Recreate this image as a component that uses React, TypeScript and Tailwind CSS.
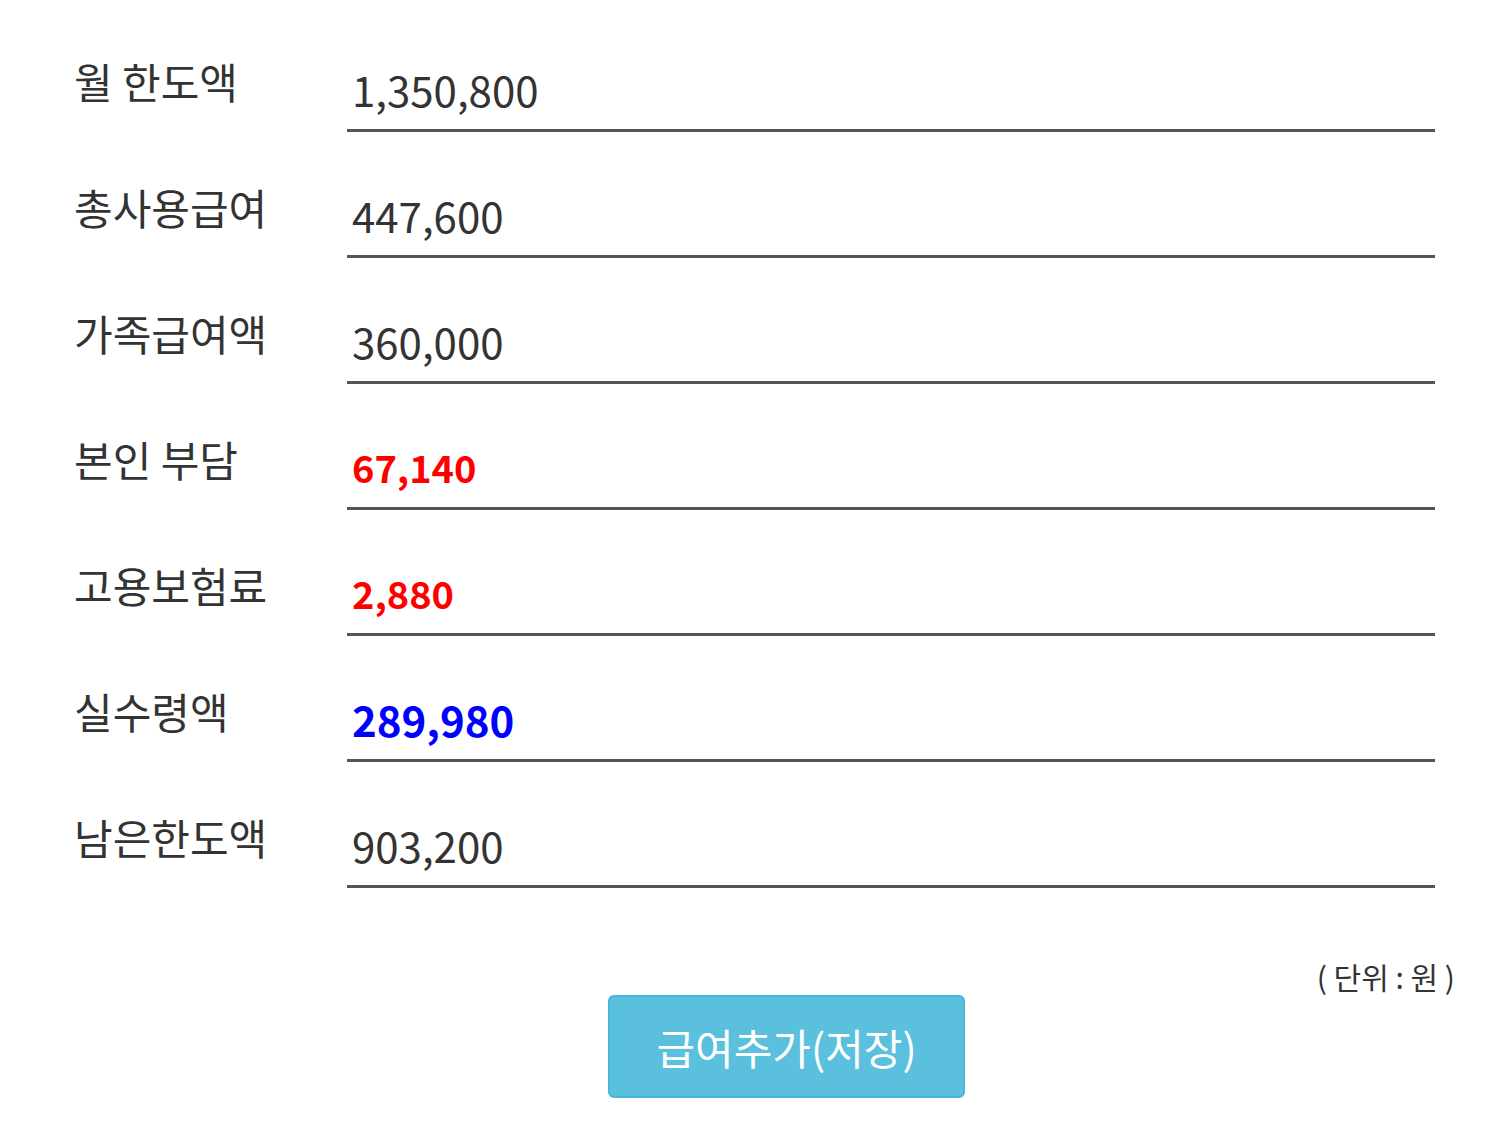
import React from 'react'

const rows = [
  { label: '월 한도액', value: '1,350,800', cls: 'text-[42px] text-[#333]' },
  { label: '총사용급여', value: '447,600', cls: 'text-[42px] text-[#333]' },
  { label: '가족급여액', value: '360,000', cls: 'text-[42px] text-[#333]' },
  { label: '본인 부담', value: '67,140', cls: 'text-[38px] font-bold text-[#ff0000]' },
  { label: '고용보험료', value: '2,880', cls: 'text-[38px] font-bold text-[#ff0000]' },
  { label: '실수령액', value: '289,980', cls: 'text-[42px] font-bold text-[#0000ff]' },
  { label: '남은한도액', value: '903,200', cls: 'text-[42px] text-[#333]' },
]

export default function App() {
  return (
    <div
      className="min-h-screen bg-white pt-[6px] pl-[74px] pr-[50px]"
      style={{ fontFamily: '"Noto Sans CJK KR", "Noto Sans", sans-serif' }}
    >
      {/* form rows */}
      <div className="flex flex-col">
        {rows.map((r) => (
          <div key={r.label} className="flex h-[126px]">
            <div className="w-[273px] shrink-0 pt-[54px] text-[42px] leading-[42px] text-[#333]">
              {r.label}
            </div>
            <div className="flex flex-1 items-end border-b-[3px] border-[#555] pb-[19px] pl-[5px]">
              <span className={`leading-[42px] ${r.cls}`}>{r.value}</span>
            </div>
          </div>
        ))}
      </div>

      {/* unit */}
      <div className="mt-[72px] mr-[-20px] text-right text-[30px] leading-[32px] text-[#333] whitespace-pre">
        ( 단위 : 원 )
      </div>

      {/* save */}
      <div className="mt-[3px] pl-[534px]">
        <button className="h-[103px] w-[357px] rounded-[6px] border-2 border-[#46b8da] bg-[#5bc0de] text-[42px] text-white">
          급여추가(저장)
        </button>
      </div>
    </div>
  )
}
